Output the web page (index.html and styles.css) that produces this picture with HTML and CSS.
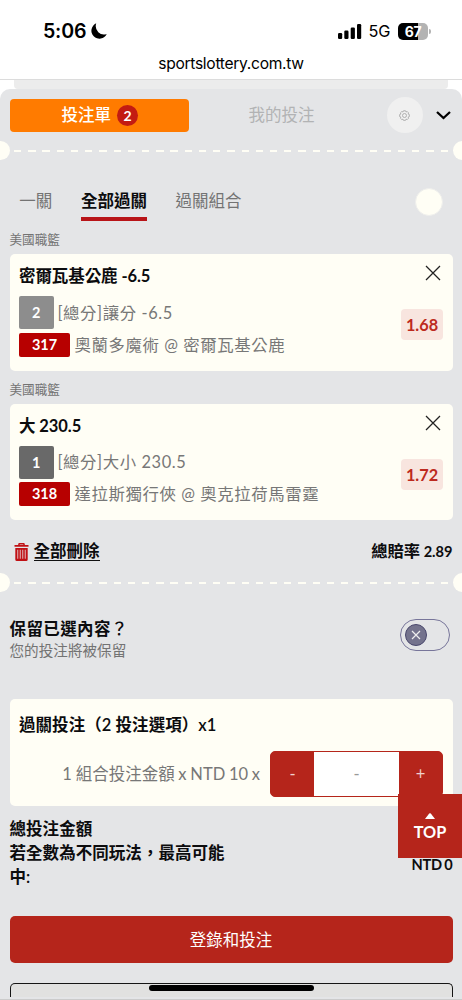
FILE: index.html
```html
<!DOCTYPE html>
<html lang="zh-Hant">
<head>
<meta charset="utf-8">
<meta name="viewport" content="width=device-width, initial-scale=1">
<title>投注單</title>
<link rel="stylesheet" href="styles.css">
</head>
<body>
<header class="browser">
  <div class="status">
    <div class="clock"><span>5:06</span>
      <svg width="16" height="16" viewBox="0 0 16 16"><path d="M5.2 .3A8 8 0 1 0 15.7 10.9Q11 12.6 7.3 9.2 3.6 5.4 5.2 .3Z"/></svg>
    </div>
    <div class="signal">
      <svg width="24" height="15" viewBox="0 0 24 15"><rect x="0" y="9" width="4.2" height="6" rx="1.2"/><rect x="6.3" y="6.5" width="4.2" height="8.5" rx="1.2"/><rect x="12.7" y="3.5" width="4.2" height="11.5" rx="1.2"/><rect x="19" y="0" width="4.2" height="15" rx="1.2"/></svg>
      <span class="net">5G</span>
      <span class="battery">67</span><i class="nub"></i>
    </div>
  </div>
  <div class="address">sportslottery.com.tw</div>
</header>
<div class="behind"></div>
<main class="sheet">
  <nav class="top">
    <div class="slip">投注單<b class="count">2</b></div>
    <div class="mine">我的投注</div>
    <div class="gear">
      <svg width="11" height="11" viewBox="0 0 22 22" fill="none" stroke="#a2a2a2" stroke-width="1.6"><path d="M9 1.5h4l1 2.4 2.5-.8 2.6 2.6-.8 2.4 2.4 1v4l-2.4 1 .8 2.4-2.6 2.6-2.5-.8-1 2.4H9l-1-2.4-2.5.8-2.6-2.6.8-2.4-2.4-1v-4l2.4-1-.8-2.4 2.6-2.6 2.5.8z"/><circle cx="11" cy="11" r="4"/></svg>
    </div>
    <svg class="chevron" width="15" height="9" viewBox="0 0 15 9" fill="none" stroke="#000" stroke-width="2.3"><path d="M1 1l6.5 6L14 1"/></svg>
  </nav>
  <div class="tear"><i></i><span></span><i></i></div>
  <div class="modes"><span>一關</span><span class="active">全部過關</span><span>過關組合</span><i class="dot"></i></div>

  <div class="league">美國職籃</div>
  <section class="card bet">
    <div class="pick">密爾瓦基公鹿 -6.5<svg width="16" height="16" viewBox="0 0 16 16" fill="none" stroke="#222" stroke-width="1.25"><path d="M1 1l14 14M15 1L1 15"/></svg></div>
    <div class="detail">
      <div class="lines">
        <div class="line"><b class="legs">2</b>[總分]讓分 -6.5</div>
        <div class="line match"><b class="code">317</b>奧蘭多魔術 @ 密爾瓦基公鹿</div>
      </div>
      <b class="odds">1.68</b>
    </div>
  </section>
  <div class="league second">美國職籃</div>
  <section class="card bet">
    <div class="pick">大 230.5<svg width="16" height="16" viewBox="0 0 16 16" fill="none" stroke="#222" stroke-width="1.25"><path d="M1 1l14 14M15 1L1 15"/></svg></div>
    <div class="detail">
      <div class="lines">
        <div class="line"><b class="legs dark">1</b>[總分]大小 230.5</div>
        <div class="line match"><b class="code">318</b>達拉斯獨行俠 @ 奧克拉荷馬雷霆</div>
      </div>
      <b class="odds">1.72</b>
    </div>
  </section>
  <div class="actions">
    <svg width="15" height="18" viewBox="0 0 15 18"><path d="M4.2 1.2Q4.2 0 5.4 0h4.2q1.2 0 1.2 1.2V2H14.5v1.8H.5V2h3.7zM5.7 1.4V2h3.6v-.6zM1.3 5h12.4v11.5q0 1.5-1.5 1.5H2.8q-1.5 0-1.5-1.5zM3.4 6.8v9h.8v-9zm2.4 0v9h.8v-9zm2.6 0v9h.8v-9zm2.4 0v9h.8v-9z" fill="#c01014" fill-rule="evenodd"/></svg>
    <span class="clear">全部刪除</span>
    <span class="total">總賠率 <small>2.89</small></span>
  </div>
  <div class="tear"><i></i><span></span><i></i></div>
  <div class="keep">
    <div><div class="ask">保留已選內容<span class="mark">？</span></div><div class="hint">您的投注將被保留</div></div>
    <div class="toggle"><i><svg width="10" height="10" viewBox="0 0 10 10" fill="none" stroke="#eee" stroke-width="1.2"><path d="M1 1l8 8M9 1L1 9"/></svg></i></div>
  </div>
  <section class="card stake">
    <div class="stake-title">過關投注（2 投注選項）x1</div>
    <div class="amount"><span>1 組合投注金額 x NTD 10 x</span>
      <div class="stepper"><b>-</b><em>-</em><b>+</b></div>
    </div>
  </section>
  <div class="sums"><div>總投注金額<br>若全數為不同玩法，最高可能<br>中:</div><span>NTD 0</span></div>
  <div class="login">登錄和投注</div>
  <div class="next"></div>
  <div class="edge"></div>
</main>
<div class="to-top"><svg width="10" height="6" viewBox="0 0 10 6"><path d="M0 6L4.2 .6Q5 0 5.8 .6L10 6z" fill="#fff"/></svg>TOP</div>
<div class="home"></div>
</body>
</html>
```
FILE: styles.css
```css
* { box-sizing: border-box; }
body {
  margin: 0;
  width: 462px;
  height: 1000px;
  overflow: hidden;
  position: relative;
  background: #fff;
  color: #0c0c0e;
  font: 16.5px/24px Lato, "Noto Sans CJK TC", sans-serif;
  white-space: nowrap;
}
i, em { font-style: normal; }
svg { display: block; flex: none; }

.browser {
  height: 80px;
  padding-top: 19px;
  border-bottom: 1px solid #dcdcdc;
  font-family: Inter, sans-serif;
  color: #000;
}
.status { display: flex; justify-content: space-between; height: 24px; padding: 0 31px 0 43px; }
.clock { display: flex; align-items: center; gap: 5px; font-size: 19.6px; font-weight: 600; letter-spacing: -.2px; }
.signal { display: flex; align-items: center; }
.net { margin: 0 8px 0 7px; font-size: 16.3px; letter-spacing: -.3px; }
.battery {
  width: 30px;
  height: 17px;
  border-radius: 5px;
  background: linear-gradient(90deg, #000 66%, #b3b3b3 66%);
  color: #fff;
  font-size: 14px;
  font-weight: 700;
  letter-spacing: -.4px;
  line-height: 17px;
  text-align: center;
}
.nub { width: 2px; height: 5px; margin-left: 1px; border-radius: 0 2px 2px 0; background: #b3b3b3; }
.address { margin-top: 9px; font-size: 15.6px; letter-spacing: -.3px; text-align: center; }

.behind { height: 9px; margin: 0 14px; background: #ececec; border-radius: 0 0 4px 4px; }
.sheet { height: 911px; background: #e4e5e7; border-radius: 10px 10px 0 0; overflow: hidden; }
.top { display: flex; align-items: center; height: 52px; padding: 0 11px 0 9.5px; }
.slip {
  display: flex;
  align-items: center;
  justify-content: center;
  gap: 6px;
  width: 179.5px;
  height: 33px;
  padding-left: 1px;
  border-radius: 4px;
  background: #ff7b00;
  color: #fff;
  font-weight: 500;
}
.count { width: 21px; height: 21px; border-radius: 50%; background: #c31b12; font-size: 14px; line-height: 21px; text-align: center; }
.mine { width: 185px; color: #b2b3b4; text-align: center; }
.gear { display: grid; place-items: center; width: 36px; height: 36px; margin-left: 12.5px; border-radius: 50%; background: #f0f0f0; }
.chevron { margin-left: 13.5px; }

.tear { display: flex; align-items: center; justify-content: space-between; height: 19px; margin: 0 -9.5px; }
.tear i { width: 19px; height: 19px; border-radius: 50%; background: #fffef5; }
.tear span { width: 434px; height: 2px; margin-top: 1px; background: repeating-linear-gradient(90deg, #fffef5 0 7.3px, transparent 7.3px 14.22px); }

.modes { display: flex; height: 62px; padding: 29px 19px 0 19.3px; color: #737373; }
.modes span { height: 31.5px; margin-right: 28.6px; }
.modes .active { border-bottom: 4px solid #b81418; color: #0c0c0e; font-weight: 700; }
.dot { width: 28px; height: 28px; margin: -1px 0 0 auto; border-radius: 50%; background: #fffef5; border: 1px solid #eeeeec; }

.league { height: 32px; padding: 8px 9.5px 0; color: #737373; font-size: 12.6px; line-height: 20px; }
.league.second { height: 33px; padding-top: 9px; }
.card { margin: 0 9.5px; border-radius: 5px; background: #fffef5; }
.bet { height: 116.5px; padding: 10px 9.5px 0; }
.pick { display: flex; justify-content: space-between; height: 24px; font-weight: 700; letter-spacing: -.08px; }
.pick svg { margin: 1px 2px 0 0; }
.detail { display: flex; justify-content: space-between; padding-top: 8px; color: #777; }
.line { display: flex; align-items: center; height: 33px; font-size: 16.4px; letter-spacing: .6px; }
.line b { color: #fff; font-size: 14.5px; text-align: center; border-radius: 2px; letter-spacing: 0; }
.legs { width: 34.5px; height: 33px; margin-right: 4px; line-height: 33px; background: #8d8d8d; }
.legs.dark { background: #696969; }
.match { height: 24px; margin-top: 3.6px; }
.code { width: 51px; height: 24px; margin-right: 4.5px; line-height: 24px; background: #b70000; }
.odds { width: 42px; height: 31px; margin-top: 13px; border-radius: 4px; background: #f8e5df; color: #bd2a20; font-size: 16.3px; line-height: 31px; text-align: center; }

.actions { display: flex; align-items: center; height: 53px; padding: 10px 9.5px 0 14px; font-weight: 600; }
.clear { margin-left: 4.5px; line-height: 18px; border-bottom: 1.5px solid #111; }
.total { margin-left: auto; font-size: 16.3px; word-spacing: -.5px; }
.total small { font-size: 14.6px; font-weight: 700; }

.keep { display: flex; justify-content: space-between; height: 106.5px; padding: 24.5px 12px 0 9.5px; }
.ask { font-weight: 600; letter-spacing: .4px; }
.mark { font-weight: 500; }
.hint { margin-top: -1px; color: #737373; font-size: 14.6px; line-height: 21px; }
.toggle { width: 50px; height: 32px; margin-top: 2px; padding: 4px; border: 1px solid #77759a; border-radius: 16px; }
.toggle i { display: grid; place-items: center; width: 22px; height: 22px; border: 1px solid #49476c; border-radius: 50%; background: #74738d; }

.stake { height: 107px; padding: 14px 9.5px 0; }
.stake-title { font-weight: 600; letter-spacing: .05px; }
.amount { display: flex; justify-content: flex-end; align-items: center; height: 46px; margin-top: 14.5px; color: #777; word-spacing: -.5px; }
.stepper { display: flex; width: 173px; height: 46px; margin-left: 10px; border: 1px solid #b5251b; border-radius: 5px; background: #b5251b; line-height: 44px; text-align: center; overflow: hidden; }
.stepper b { flex: 1; color: #f0d0cc; font-weight: 400; }
.stepper em { width: 85px; background: #fff; color: #999; }

.sums { display: flex; justify-content: space-between; align-items: center; height: 94px; margin-bottom: 16.5px; padding: 1.5px 9.5px 0; font-weight: 600; letter-spacing: .05px; }
.sums span { margin-top: 23px; font-size: 14.6px; font-weight: 700; letter-spacing: -.3px; word-spacing: -.6px; }
.login { height: 47px; margin: 0 9.5px; border-radius: 5px; background: #b5251b; color: #fff; line-height: 49px; text-align: center; }
.next { height: 14px; margin: 19.5px 9.5px 0; border: 1px solid #151515; border-bottom: 0; border-radius: 5px 5px 0 0; background: #e1e1e0; }
.edge { height: 1px; margin-top: 2px; background: #cbcbcb; }

.to-top {
  position: absolute;
  right: 0;
  top: 794px;
  display: flex;
  flex-direction: column;
  align-items: center;
  width: 64px;
  height: 63.5px;
  padding-top: 18.5px;
  background: #b5251b;
  color: #fff;
  font-weight: 700;
  font-size: 16.3px;
  line-height: 26px;
}
.home { position: absolute; left: 149px; top: 984.5px; width: 164.5px; height: 6px; border-radius: 3px; background: #000; }
```
